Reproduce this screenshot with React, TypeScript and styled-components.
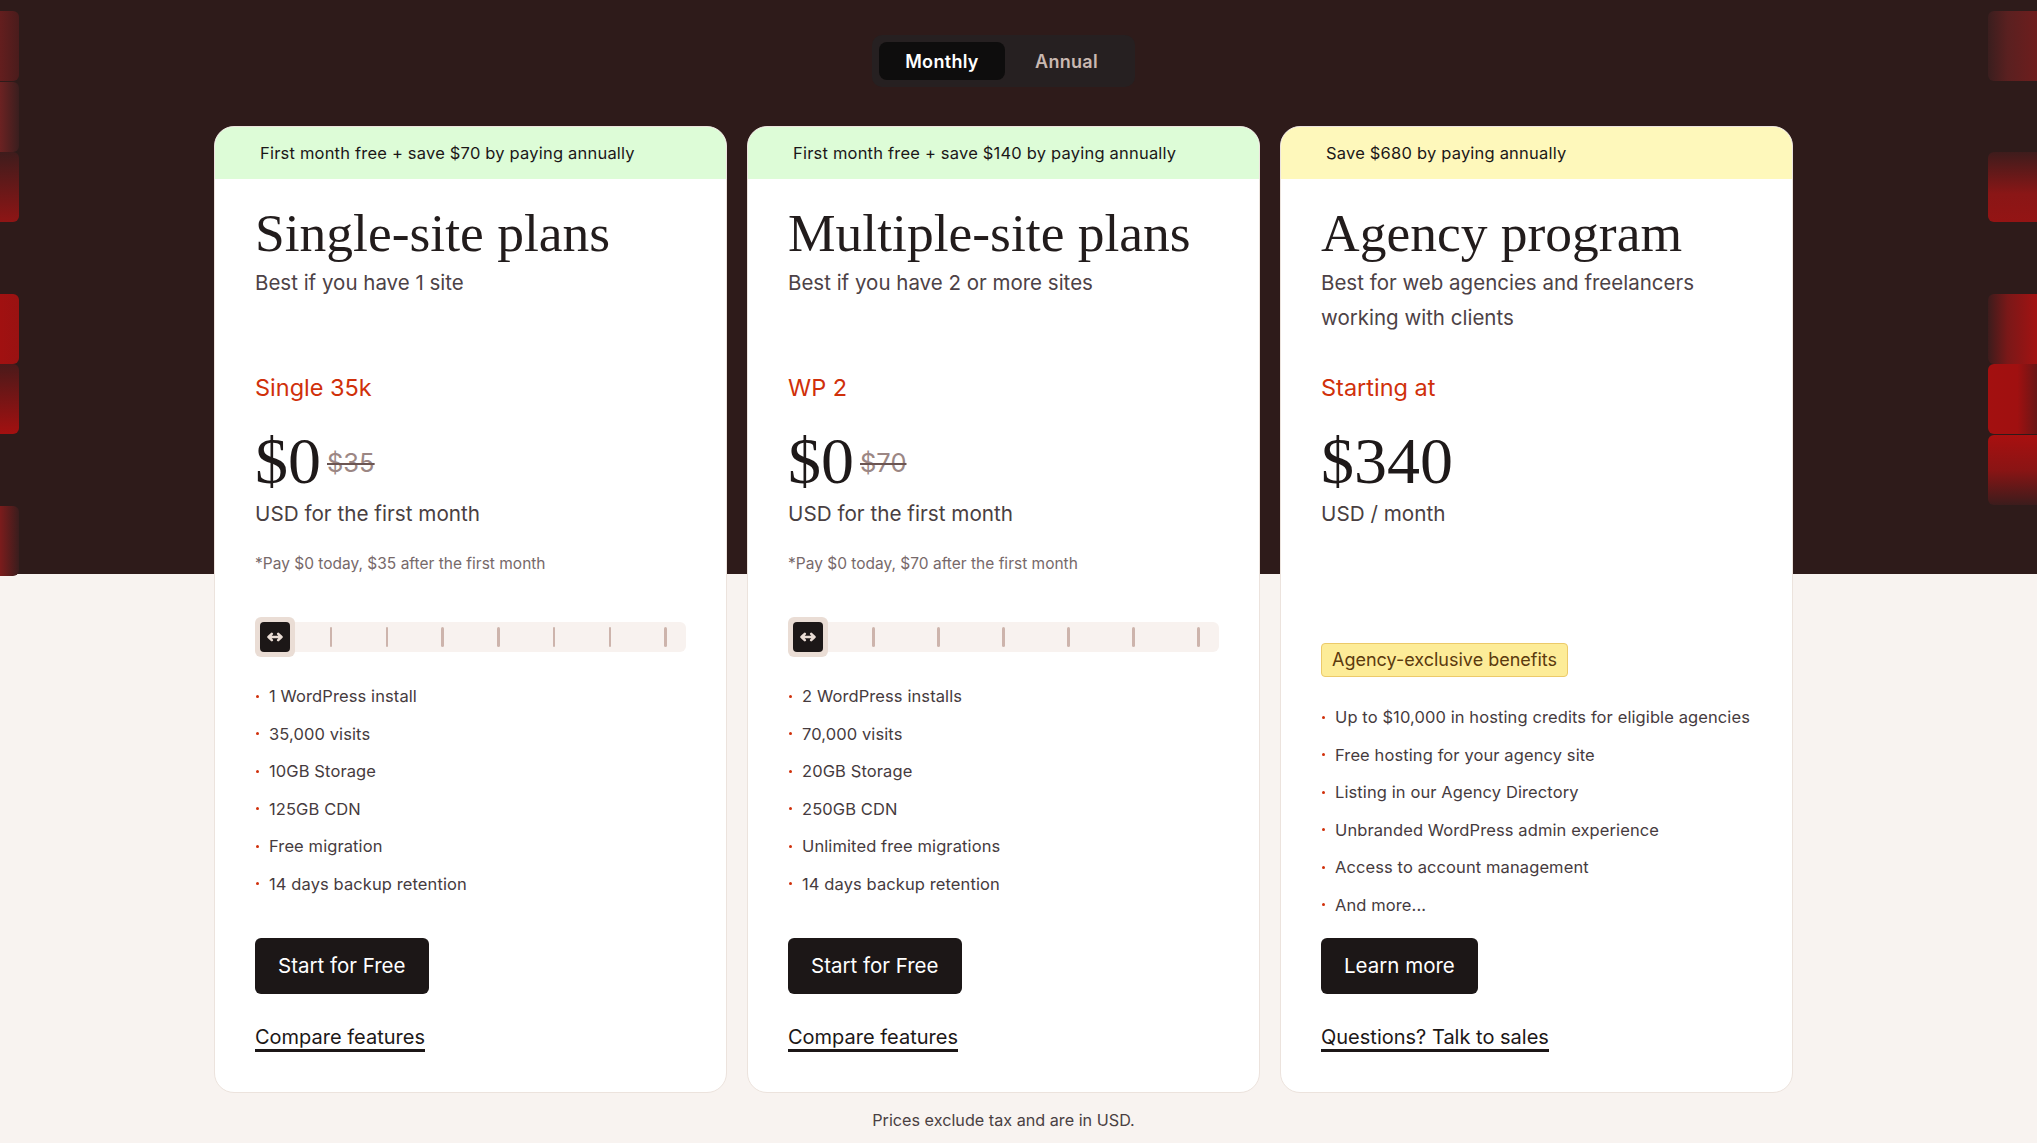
import React from 'react'
import styled, { createGlobalStyle } from 'styled-components'

const GlobalStyle = createGlobalStyle`
  html, body {
    margin: 0;
    padding: 0;
    background: #f8f3f0;
  }
  body {
    font-family: Inter, "Noto Sans", sans-serif;
    -webkit-font-smoothing: antialiased;
  }
  * { box-sizing: border-box; }
`

const DARK = '#2e1b1a'
const RED = '#d0300a'

type Side = 'left' | 'right'

// decorative cells down the page edges, top to bottom
const leftCells = [
  'linear-gradient(90deg, #641e1e, #4a1c1c)',
  'linear-gradient(90deg, #6c2222, #3a1e1e)',
  'linear-gradient(180deg, #3e1c1c, #8e1515)',
  null,
  'linear-gradient(90deg, #a11111, #9a1212)',
  'linear-gradient(180deg, #4a1a1a, #a31010)',
  null,
  'linear-gradient(90deg, #7c1c1c, #3a1d1d)',
]

const rightCells = [
  'linear-gradient(90deg, #3a1e1e, #5a2020 40%, #6e1d1d)',
  null,
  'linear-gradient(180deg, #3e1c1c, #8a1616 60%, #941414)',
  null,
  'linear-gradient(90deg, #3c1c1c, #7a1818 40%, #a31212)',
  'linear-gradient(90deg, #a31010, #a01010 60%, #6a1616)',
  'linear-gradient(180deg, #a81010, #8a1414 50%, #3c1c1c)',
  null,
]

type Plan = {
  banner: string
  bannerTone: 'green' | 'yellow'
  title: string
  subtitle: string
  planName: string
  price: string
  oldPrice?: string
  unit: string
  note?: string
  steps?: number
  badge?: string
  features: string[]
  cta: string
  link: string
}

const plans: Plan[] = [
  {
    banner: 'First month free + save $70 by paying annually',
    bannerTone: 'green',
    title: 'Single-site plans',
    subtitle: 'Best if you have 1 site',
    planName: 'Single 35k',
    price: '$0',
    oldPrice: '$35',
    unit: 'USD for the first month',
    note: '*Pay $0 today, $35 after the first month',
    steps: 7,
    features: [
      '1 WordPress install',
      '35,000 visits',
      '10GB Storage',
      '125GB CDN',
      'Free migration',
      '14 days backup retention',
    ],
    cta: 'Start for Free',
    link: 'Compare features',
  },
  {
    banner: 'First month free + save $140 by paying annually',
    bannerTone: 'green',
    title: 'Multiple-site plans',
    subtitle: 'Best if you have 2 or more sites',
    planName: 'WP 2',
    price: '$0',
    oldPrice: '$70',
    unit: 'USD for the first month',
    note: '*Pay $0 today, $70 after the first month',
    steps: 6,
    features: [
      '2 WordPress installs',
      '70,000 visits',
      '20GB Storage',
      '250GB CDN',
      'Unlimited free migrations',
      '14 days backup retention',
    ],
    cta: 'Start for Free',
    link: 'Compare features',
  },
  {
    banner: 'Save $680 by paying annually',
    bannerTone: 'yellow',
    title: 'Agency program',
    subtitle: 'Best for web agencies and freelancers working with clients',
    planName: 'Starting at',
    price: '$340',
    unit: 'USD / month',
    badge: 'Agency-exclusive benefits',
    features: [
      'Up to $10,000 in hosting credits for eligible agencies',
      'Free hosting for your agency site',
      'Listing in our Agency Directory',
      'Unbranded WordPress admin experience',
      'Access to account management',
      'And more...',
    ],
    cta: 'Learn more',
    link: 'Questions? Talk to sales',
  },
]

function ArrowIcon() {
  return (
    <svg width="16" height="10" viewBox="0 0 16 10" fill="none">
      <path
        d="M1.5 5h13M4.8 1.8 1.5 5l3.3 3.2M11.2 1.8 14.5 5l-3.3 3.2"
        stroke="#eaddd5"
        strokeWidth="2.5"
        strokeLinecap="round"
        strokeLinejoin="round"
      />
    </svg>
  )
}

function Slider({ steps }: { steps: number }) {
  return (
    <SliderRoot>
      <Track>
        {Array.from({ length: steps + 1 }).map((_, i) =>
          <Tick key={i} $hidden={i === 0} />
        )}
      </Track>
      <Thumb>
        <ThumbInner><ArrowIcon /></ThumbInner>
      </Thumb>
    </SliderRoot>
  )
}

function PlanCard({ plan }: { plan: Plan }) {
  return (
    <Card>
      <Banner $tone={plan.bannerTone}>{plan.banner}</Banner>
      <Body>
        <Title>{plan.title}</Title>
        <Subtitle>{plan.subtitle}</Subtitle>
        <PlanName>{plan.planName}</PlanName>
        <PriceRow>
          <Price>{plan.price}</Price>
          {plan.oldPrice && <OldPrice>{plan.oldPrice}</OldPrice>}
        </PriceRow>
        <Unit>{plan.unit}</Unit>
        {plan.note && <Note>{plan.note}</Note>}
        {plan.steps && <Slider steps={plan.steps} />}
        {plan.badge && <Badge>{plan.badge}</Badge>}
        <Features $afterBadge={!!plan.badge}>
          {plan.features.map(f => <Feature key={f}>{f}</Feature>)}
        </Features>
        <Actions>
          <Button>{plan.cta}</Button>
          <TextLink href="#">{plan.link}</TextLink>
        </Actions>
      </Body>
    </Card>
  )
}

export default function App() {
  return (
    <>
      <GlobalStyle />
      <Page>
        <Decor>
          {leftCells.map((fill, i) =>
            <Cell key={i} $side="left" $fill={fill} />
          )}
        </Decor>

        <Main>
          <Toggle>
            <ToggleOption $active>Monthly</ToggleOption>
            <ToggleOption>Annual</ToggleOption>
          </Toggle>

          <Cards>
            {plans.map(p => <PlanCard key={p.title} plan={p} />)}
          </Cards>

          <Footnote>Prices exclude tax and are in USD.</Footnote>
        </Main>

        <Decor>
          {rightCells.map((fill, i) =>
            <Cell key={i} $side="right" $fill={fill} />
          )}
        </Decor>
      </Page>
    </>
  )
}

const Page = styled.div`
  display: grid;
  grid-template-columns: 19px 1fr 49px;
  min-height: 100vh;
  background: linear-gradient(to bottom, ${DARK} 0, ${DARK} 574px, #f8f3f0 574px);
`

const Decor = styled.div`
  align-self: start;
  display: grid;
  grid-auto-rows: 70px;
  row-gap: 0.7px;
  padding-top: 11px;
`

const Cell = styled.div<{ $side: Side; $fill: string | null }>`
  border-radius: ${p => p.$side === 'left' ? '0 6px 6px 0' : '6px 0 0 6px'};
  background: ${p => p.$fill || 'transparent'};
`

const Main = styled.main`
  display: flex;
  flex-direction: column;
  align-items: center;
  padding-top: 35px;
`

const Toggle = styled.div`
  display: flex;
  width: 263px;
  padding: 7px;
  background: #262021;
  border-radius: 10px;
`

const ToggleOption = styled.button<{ $active?: boolean }>`
  flex: ${p => p.$active ? '0 0 126px' : '1'};
  height: 38px;
  border: 0;
  border-radius: 8px;
  background: ${p => p.$active ? '#0e0d0d' : 'transparent'};
  color: ${p => p.$active ? '#ffffff' : '#c9b8b1'};
  font-family: Inter, sans-serif;
  font-size: 18px;
  font-weight: 600;
  letter-spacing: 0.3px;
  cursor: pointer;
`

const Cards = styled.div`
  display: grid;
  grid-template-columns: repeat(3, 513px);
  gap: 20px;
  margin-top: 39px;
`

const Card = styled.div`
  display: flex;
  flex-direction: column;
  background: #ffffff;
  border: 1px solid #ece3dd;
  border-radius: 20px;
  overflow: hidden;
`

const Banner = styled.div<{ $tone: 'green' | 'yellow' }>`
  height: 52px;
  padding: 0 45px;
  line-height: 52px;
  font-size: 16.5px;
  letter-spacing: 0.2px;
  color: #1b1717;
  background: ${p => p.$tone === 'green' ? '#ddfcd7' : '#fef8bb'};
`

const Body = styled.div`
  flex: 1;
  display: flex;
  flex-direction: column;
  padding: 26px 40px 40px;
`

const Title = styled.h2`
  margin: -2px 0 0;
  font-family: "Liberation Serif", serif;
  font-weight: 400;
  font-size: 53.5px;
  line-height: 61px;
  color: #221c1c;
`

const Subtitle = styled.p`
  margin: 1px 0 0;
  min-height: 70px;
  font-size: 20.5px;
  line-height: 35px;
  color: #4d4246;
`

const PlanName = styled.div`
  margin-top: 37px;
  font-size: 23.5px;
  line-height: 32px;
  color: ${RED};
`

const PriceRow = styled.div`
  display: flex;
  align-items: center;
  gap: 6px;
  margin-top: 25px;
  height: 64px;
`

const Price = styled.span`
  font-family: "Liberation Serif", serif;
  font-size: 66px;
  line-height: 64px;
  color: #1e1919;
`

const OldPrice = styled.span`
  margin-top: 4px;
  font-size: 25.5px;
  line-height: 26px;
  color: #9c8784;
  text-decoration: line-through;
  text-decoration-color: #6b5552;
  text-decoration-thickness: 2px;
`

const Unit = styled.div`
  margin-top: 3px;
  font-size: 20.7px;
  line-height: 35px;
  color: #4a3f42;
`

const Note = styled.div`
  margin-top: 21px;
  font-size: 15.5px;
  line-height: 24px;
  color: #77696a;
`

const SliderRoot = styled.div`
  position: relative;
  margin-top: 41px;
  height: 40px;
  display: flex;
  align-items: center;
`

const Track = styled.div`
  flex: 1;
  height: 30px;
  display: flex;
  align-items: center;
  justify-content: space-between;
  padding: 0 19px;
  background: #f8f2ef;
  border-radius: 6px;
`

const Tick = styled.span<{ $hidden?: boolean }>`
  width: 2.5px;
  height: 20px;
  border-radius: 2px;
  background: ${p => p.$hidden ? 'transparent' : '#cdb4ac'};
`

const Thumb = styled.div`
  position: absolute;
  left: 0;
  top: 0;
  width: 40px;
  height: 40px;
  padding: 5px;
  border-radius: 6px;
  background: #eaddd5;
`

const ThumbInner = styled.div`
  width: 30px;
  height: 30px;
  display: flex;
  align-items: center;
  justify-content: center;
  border-radius: 4px;
  background: #1c1717;
`

const Badge = styled.div`
  align-self: flex-start;
  margin-top: 112px;
  height: 34px;
  padding: 0 10px;
  line-height: 32px;
  font-size: 18px;
  color: #5b3a0e;
  background: #fdec98;
  border: 1px solid #ecca6a;
  border-radius: 4px;
`

const Features = styled.ul<{ $afterBadge?: boolean }>`
  list-style: none;
  margin: ${p => p.$afterBadge ? '28px' : '27px'} 0 0;
  padding: 0;
  display: flex;
  flex-direction: column;
  gap: 13.6px;
`

const Feature = styled.li`
  display: flex;
  align-items: center;
  gap: 10px;
  font-size: 16.5px;
  letter-spacing: 0.1px;
  line-height: 24px;
  color: #463b3e;

  &::before {
    content: '';
    flex: 0 0 3px;
    height: 3px;
    margin-left: 1px;
    border-radius: 50%;
    background: ${RED};
  }
`

const Actions = styled.div`
  margin-top: auto;
  padding-top: 21px;
  display: flex;
  flex-direction: column;
  align-items: flex-start;
`

const Button = styled.button`
  height: 56px;
  padding: 0 23px;
  border: 0;
  border-radius: 6px;
  background: #1c1717;
  color: #ffffff;
  font-family: Inter, sans-serif;
  font-size: 20.5px;
  cursor: pointer;
`

const TextLink = styled.a`
  margin-top: 31px;
  font-size: 20px;
  line-height: 24px;
  color: #1c1717;
  text-decoration: none;
  border-bottom: 3px solid #1c1717;
`

const Footnote = styled.p`
  margin: 15px 0 0;
  font-size: 16.2px;
  line-height: 24px;
  color: #4a3f42;
`
